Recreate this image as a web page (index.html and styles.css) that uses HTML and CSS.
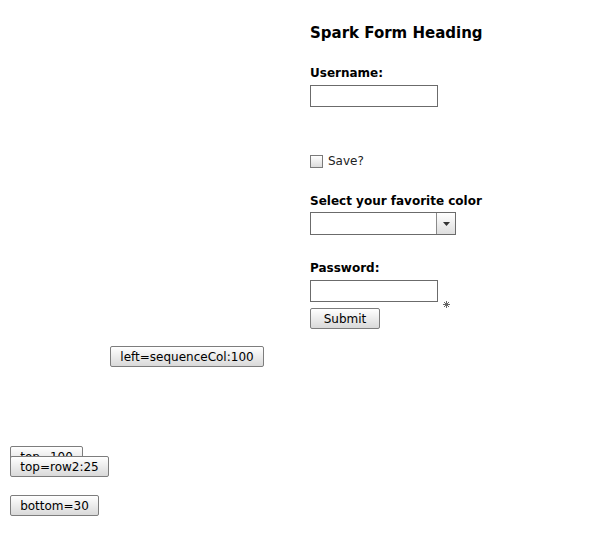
FILE: index.html
```html
<!DOCTYPE html>
<html>
<head>
<meta charset="utf-8">
<link rel="stylesheet" href="styles.css">
</head>
<body>
<div class="canvas">
  <form class="form">
    <h1 class="heading">Spark Form Heading</h1>
    <div class="item item-user">
      <label class="label">Username:</label>
      <div class="field"><span class="textinput"></span></div>
    </div>
    <div class="item item-save">
      <span class="checkbox"></span><span class="check-label">Save?</span>
    </div>
    <div class="item item-color">
      <label class="label">Select your favorite color</label>
      <div class="field field-dd">
        <span class="dropdown"><span class="dd-text"></span><span class="dd-btn"><svg width="7" height="4" viewBox="0 0 7 4"><path d="M0 0H7L3.5 4Z" fill="#333"/></svg></span></span>
      </div>
    </div>
    <div class="item item-pass">
      <label class="label">Password:</label>
      <div class="field pass-row"><span class="textinput"></span><svg class="required" width="7" height="7" viewBox="0 0 7 7"><path d="M3.5 0V7M0 3.5H7M1 1L6 6M6 1L1 6" stroke="#666" stroke-width="1" fill="none"/></svg></div>
      <div class="submit-row"><button type="button" class="btn btn-submit">Submit</button></div>
    </div>
  </form>
  <button type="button" class="btn abs b-left">left=sequenceCol:100</button>
  <button type="button" class="btn abs b-top">top=100</button>
  <button type="button" class="btn abs b-row2">top=row2:25</button>
  <button type="button" class="btn abs b-bottom">bottom=30</button>
</div>
</body>
</html>
```
FILE: styles.css
```css
html, body {
  margin: 0;
  padding: 0;
  background: #fff;
}
body {
  font-family: "DejaVu Sans", sans-serif;
  color: #000;
}
.canvas {
  position: relative;
  width: 589px;
  height: 556px;
  overflow: hidden;
}
.form {
  display: flex;
  flex-direction: column;
  padding: 23px 0 0 310px;
}
.heading {
  margin: 0;
  font-size: 15px;
  font-weight: bold;
  line-height: 20px;
  height: 20px;
}
.label {
  display: block;
  font-size: 12px;
  font-weight: bold;
  line-height: 16px;
  height: 16px;
}
.field {
  margin-top: 4px;
  display: flex;
  align-items: flex-end;
}
.field-dd { margin-top: 3px; }
.item-user { margin-top: 22px; }
.item-save {
  margin-top: 47px;
  display: flex;
  align-items: center;
  height: 14px;
}
.item-color { margin-top: 25px; }
.item-pass { margin-top: 25px; }
.textinput {
  display: block;
  box-sizing: border-box;
  width: 128px;
  height: 22px;
  border: 1px solid #6b6b6b;
  background: #fff;
}
.checkbox {
  display: block;
  box-sizing: border-box;
  width: 13px;
  height: 13px;
  border: 1px solid #7a7a7a;
  background: linear-gradient(#ffffff, #dcdcdc);
}
.check-label {
  font-size: 12px;
  margin-left: 5px;
  line-height: 14px;
  color: #222;
}
.dropdown {
  display: flex;
  box-sizing: border-box;
  width: 146px;
  height: 23px;
  border: 1px solid #6b6b6b;
  background: #fff;
}
.dd-text { flex: 1; }
.dd-btn {
  width: 18px;
  border-left: 1px solid #8a8a8a;
  background: linear-gradient(#ffffff, #dedede);
  display: flex;
  align-items: center;
  justify-content: center;
}
.required {
  display: block;
  margin-left: 5px;
  margin-bottom: -6px;
}
.submit-row { margin-top: 6px; }
.btn {
  box-sizing: border-box;
  height: 21px;
  padding: 1px 9px 0;
  border: 1px solid #7d7d7d;
  border-radius: 2px;
  background: linear-gradient(#ffffff, #d9d9d9);
  font-family: "DejaVu Sans", sans-serif;
  font-size: 12px;
  line-height: 18px;
  color: #000;
  white-space: nowrap;
}
.btn-submit { width: 70px; display: block; }
.abs { position: absolute; }
.b-left { left: 110px; top: 346px; width: 154px; }
.b-top { left: 10px; top: 446px; width: 73px; }
.b-row2 { left: 10px; top: 456px; width: 99px; }
.b-bottom { left: 10px; top: 495px; width: 89px; }
```
